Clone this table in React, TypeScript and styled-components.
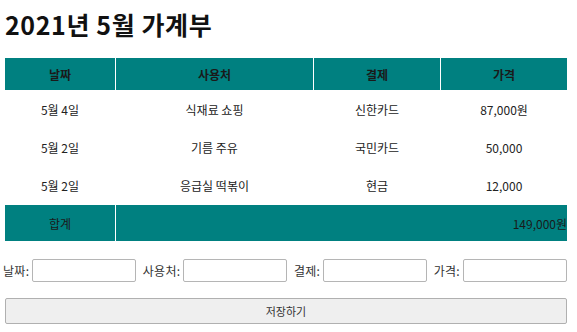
import styled, { createGlobalStyle } from "styled-components";

const GlobalStyle = createGlobalStyle`
  body {
    margin: 0;
    font-family: "Noto Sans CJK KR", "Noto Sans", sans-serif;
    color: #222;
    background: #fff;
  }
`;

const Page = styled.div`
  padding: 0 5px;
`;

const Title = styled.h1`
  margin: 7px 0 16px;
  font-size: 25px;
  font-weight: 700;
  letter-spacing: 0.6px;
  line-height: 34px;
  color: #111;
`;

const Table = styled.table`
  width: 562px;
  border-collapse: separate;
  border-spacing: 1px;
  margin: 0 -1px;
  font-size: 12px;
  table-layout: fixed;
`;

const HeadCell = styled.th<{ $width: number }>`
  width: ${({ $width }) => $width}px;
  height: 32px;
  padding: 0;
  background: #008080;
  color: #1a1a1a;
  font-weight: 700;
  text-align: center;
`;

const Cell = styled.td`
  height: 37px;
  padding: 0;
  text-align: center;
  color: #222;
`;

const TotalCell = styled.td<{ $align?: "center" | "right" }>`
  height: 36px;
  padding: 0;
  background: #008080;
  color: #1a1a1a;
  text-align: ${({ $align }) => $align ?? "center"};
`;

const Form = styled.form`
  display: flex;
  flex-direction: column;
  gap: 16px;
  margin: 17px 0 0 -2px;
`;

const FieldRow = styled.div`
  display: flex;
  align-items: center;
  justify-content: space-between;
  width: 564px;
  font-size: 12px;
  color: #333;
`;

const Label = styled.label`
  display: flex;
  align-items: center;
  gap: 3px;
  white-space: nowrap;
  letter-spacing: 0.3px;
`;

const Input = styled.input`
  box-sizing: border-box;
  width: 104px;
  height: 23px;
  border: 1px solid #b5b5b5;
  border-radius: 2px;
  padding: 0 4px;
  font: inherit;
`;

const SaveButton = styled.button`
  box-sizing: border-box;
  margin-left: 2px;
  width: 562px;
  height: 26px;
  border: 1px solid #b0b0b0;
  border-radius: 2px;
  background: #efefef;
  color: #333;
  font-family: inherit;
  font-size: 11px;
`;

const rows = [
  { date: "5월 4일", place: "식재료 쇼핑", payment: "신한카드", price: "87,000원" },
  { date: "5월 2일", place: "기름 주유", payment: "국민카드", price: "50,000" },
  { date: "5월 2일", place: "응급실 떡볶이", payment: "현금", price: "12,000" },
];

const fields = ["날짜", "사용처", "결제", "가격"];

export default function App() {
  return (
    <Page>
      <GlobalStyle />
      <Title>2021년 5월 가계부</Title>
      <Table>
        <thead>
          <tr>
            <HeadCell $width={110}>날짜</HeadCell>
            <HeadCell $width={197}>사용처</HeadCell>
            <HeadCell $width={126}>결제</HeadCell>
            <HeadCell $width={126}>가격</HeadCell>
          </tr>
        </thead>
        <tbody>
          {rows.map((row, i) => (
            <tr key={i}>
              <Cell>{row.date}</Cell>
              <Cell>{row.place}</Cell>
              <Cell>{row.payment}</Cell>
              <Cell>{row.price}</Cell>
            </tr>
          ))}
        </tbody>
        <tfoot>
          <tr>
            <TotalCell>합계</TotalCell>
            <TotalCell colSpan={3} $align="right">
              149,000원
            </TotalCell>
          </tr>
        </tfoot>
      </Table>
      <Form onSubmit={(e) => e.preventDefault()}>
        <FieldRow>
          {fields.map((name) => (
            <Label key={name}>
              {name}:
              <Input type="text" />
            </Label>
          ))}
        </FieldRow>
        <SaveButton type="submit">저장하기</SaveButton>
      </Form>
    </Page>
  );
}
